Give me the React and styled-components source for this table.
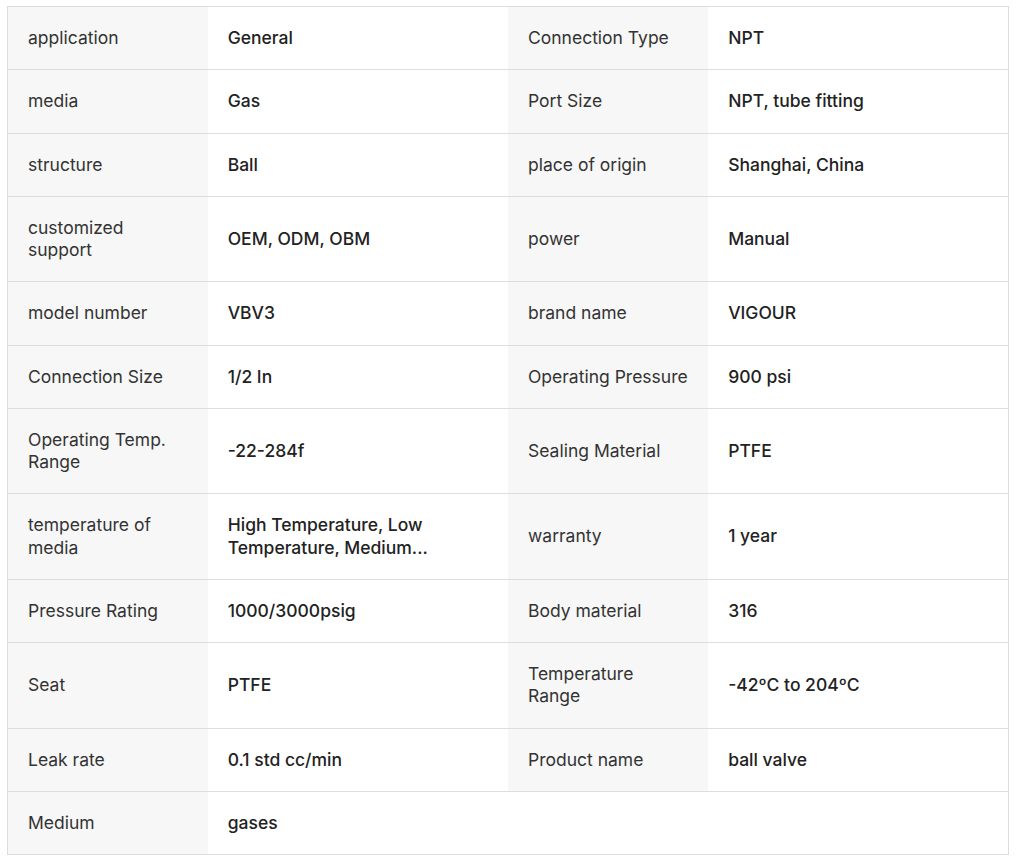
import React from "react";
import styled, { createGlobalStyle } from "styled-components";

const Global = createGlobalStyle`
  html, body { margin: 0; padding: 0; background: #fff; }
  body { padding: 6px 7px; font-family: Inter, "Noto Sans", "Liberation Sans", sans-serif; }
`;

const Table = styled.table`
  width: 1002px;
  border-collapse: collapse;
  table-layout: fixed;
  border: 1px solid #dddddd;
  font-size: 17.5px;
  line-height: 22.25px;
`;

const Row = styled.tr`
  border-bottom: 1px solid #dddddd;
`;

const Label = styled.td`
  box-sizing: border-box;
  padding: 20px 20px;
  background: #f7f7f7;
  color: #333333;
  font-weight: 400;
  vertical-align: middle;
`;

const Value = styled.td`
  box-sizing: border-box;
  padding: 20px 20px;
  background: #ffffff;
  color: #222222;
  font-weight: 500;
  vertical-align: middle;
`;

const rows = [
  ["application", "General", "Connection Type", "NPT"],
  ["media", "Gas", "Port Size", "NPT, tube fitting"],
  ["structure", "Ball", "place of origin", "Shanghai, China"],
  ["customized support", "OEM, ODM, OBM", "power", "Manual"],
  ["model number", "VBV3", "brand name", "VIGOUR"],
  ["Connection Size", "1/2 In", "Operating Pressure", "900 psi"],
  ["Operating Temp. Range", "-22-284f", "Sealing Material", "PTFE"],
  ["temperature of media", "High Temperature, Low Temperature, Medium...", "warranty", "1 year"],
  ["Pressure Rating", "1000/3000psig", "Body material", "316"],
  ["Seat", "PTFE", "Temperature Range", "-42ºC to 204ºC"],
  ["Leak rate", "0.1 std cc/min", "Product name", "ball valve"],
  ["Medium", "gases"],
];

export default function App() {
  return (
    <>
      <Global />
      <Table>
        <colgroup>
          <col style={{ width: 200 }} />
          <col style={{ width: 300 }} />
          <col style={{ width: 200 }} />
          <col style={{ width: 300 }} />
        </colgroup>
        <tbody>
          {rows.map((r, i) => (
            <Row key={i}>
              <Label>{r[0]}</Label>
              <Value>{r[1]}</Value>
              {r[2] ? <Label>{r[2]}</Label> : <Value />}
              {r[3] ? <Value>{r[3]}</Value> : <Value />}
            </Row>
          ))}
        </tbody>
      </Table>
    </>
  );
}
